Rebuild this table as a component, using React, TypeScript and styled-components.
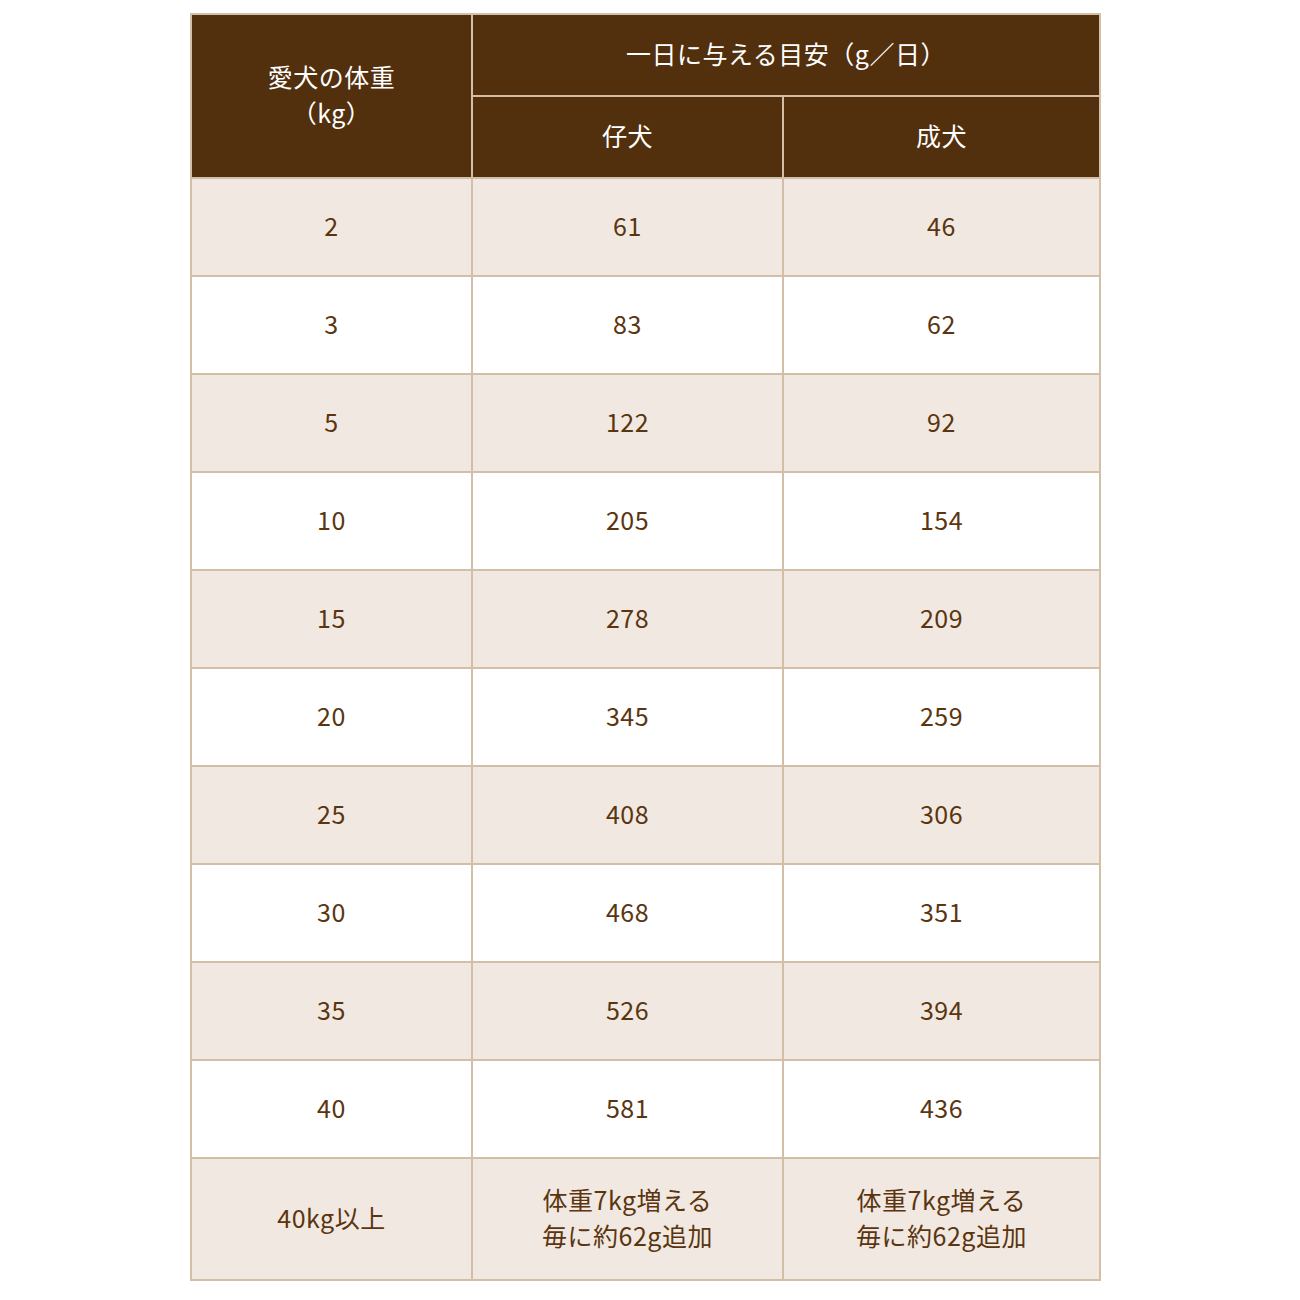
import styled, { createGlobalStyle } from 'styled-components'

const GlobalStyle = createGlobalStyle`
  html, body {
    margin: 0;
    padding: 0;
    background: #ffffff;
  }
  body {
    font-family: "Noto Sans CJK JP", "Noto Sans", sans-serif;
  }
`

const Page = styled.div`
  padding: 13px 0 0 190px;
`

const Table = styled.table`
  border-collapse: separate;
  border-spacing: 0;
  width: 911px;
  table-layout: fixed;
  border-top: 2px solid #d3bfa7;
  border-left: 2px solid #d3bfa7;
  font-size: 25px;
  letter-spacing: 0.02em;
`

const HeadCell = styled.th<{ $h?: number }>`
  box-sizing: border-box;
  background: #52300e;
  color: #ffffff;
  font-weight: 400;
  text-align: center;
  vertical-align: middle;
  height: ${p => p.$h ?? 82}px;
  padding: 0 0 5px;
  border-right: 2px solid #d3bfa7;
  border-bottom: 2px solid #d3bfa7;
  line-height: 36px;
`

const Row = styled.tr<{ $alt: boolean }>`
  background: ${p => (p.$alt ? '#f1e9e1' : '#ffffff')};
`

const Cell = styled.td<{ $h?: number }>`
  box-sizing: border-box;
  color: #5a3510;
  text-align: center;
  vertical-align: middle;
  height: ${p => p.$h ?? 98}px;
  padding: 0 0 5px;
  border-right: 2px solid #d3bfa7;
  border-bottom: 2px solid #d3bfa7;
  line-height: 36px;
`

const rows: [string, string, string][] = [
  ['2', '61', '46'],
  ['3', '83', '62'],
  ['5', '122', '92'],
  ['10', '205', '154'],
  ['15', '278', '209'],
  ['20', '345', '259'],
  ['25', '408', '306'],
  ['30', '468', '351'],
  ['35', '526', '394'],
  ['40', '581', '436'],
]

export default function App() {
  return (
    <Page>
      <GlobalStyle />
      <Table>
        <colgroup>
          <col style={{ width: 281 }} />
          <col style={{ width: 311 }} />
          <col />
        </colgroup>
        <thead>
          <tr>
            <HeadCell rowSpan={2}>
              愛犬の体重
              <br />
              （kg）
            </HeadCell>
            <HeadCell colSpan={2}>一日に与える目安（g／日）</HeadCell>
          </tr>
          <tr>
            <HeadCell>仔犬</HeadCell>
            <HeadCell>成犬</HeadCell>
          </tr>
        </thead>
        <tbody>
          {rows.map((r, i) => (
            <Row key={r[0]} $alt={i % 2 === 0}>
              <Cell>{r[0]}</Cell>
              <Cell>{r[1]}</Cell>
              <Cell>{r[2]}</Cell>
            </Row>
          ))}
          <Row $alt>
            <Cell $h={122}>40kg以上</Cell>
            <Cell $h={122}>
              体重7kg増える
              <br />
              毎に約62g追加
            </Cell>
            <Cell $h={122}>
              体重7kg増える
              <br />
              毎に約62g追加
            </Cell>
          </Row>
        </tbody>
      </Table>
    </Page>
  )
}
